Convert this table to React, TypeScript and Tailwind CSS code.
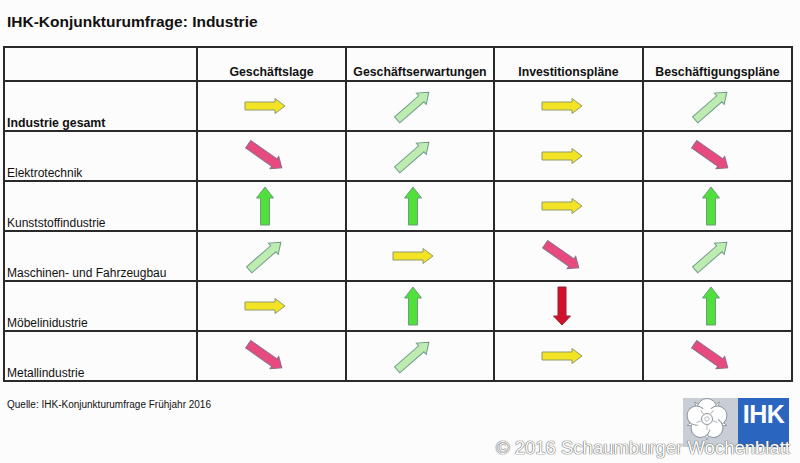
import React from "react";

type Kind = "R" | "UR" | "DR" | "U" | "D";

const specs: Record<Kind, { L: number; s: number; h: number; hl: number; rot: number; fill: string; stroke: string }> = {
  R: { L: 40, s: 8, h: 15, hl: 10, rot: 0, fill: "#f2e424", stroke: "#8f9a6c" },
  UR: { L: 42, s: 8, h: 15, hl: 10, rot: -41, fill: "#bdebb0", stroke: "#6f9d8c" },
  DR: { L: 41, s: 9, h: 15, hl: 9, rot: 35, fill: "#e84a80", stroke: "#8a6d8c" },
  U: { L: 38, s: 9, h: 17, hl: 11, rot: -90, fill: "#4fe03c", stroke: "#6e9c7c" },
  D: { L: 38, s: 8, h: 17, hl: 9, rot: 90, fill: "#d3112b", stroke: "#8c2a36" },
};

function Arrow({ kind }: { kind: Kind }) {
  const { L, s, h, hl, rot, fill, stroke } = specs[kind];
  const a = -L / 2;
  const b = L / 2 - hl;
  const c = L / 2;
  const pts = [
    [a, -s / 2],
    [b, -s / 2],
    [b, -h / 2],
    [c, 0],
    [b, h / 2],
    [b, s / 2],
    [a, s / 2],
  ]
    .map((p) => p.join(","))
    .join(" ");
  return (
    <svg width="56" height="46" viewBox="-28 -23 56 46">
      <polygon
        points={pts}
        fill={fill}
        stroke={stroke}
        strokeWidth="1"
        strokeLinejoin="miter"
        transform={`rotate(${rot})`}
      />
    </svg>
  );
}

const rows: { label: string; bold?: boolean; arrows: Kind[] }[] = [
  { label: "Industrie gesamt", bold: true, arrows: ["R", "UR", "R", "UR"] },
  { label: "Elektrotechnik", arrows: ["DR", "UR", "R", "DR"] },
  { label: "Kunststoffindustrie", arrows: ["U", "U", "R", "U"] },
  { label: "Maschinen- und Fahrzeugbau", arrows: ["UR", "R", "DR", "UR"] },
  { label: "Möbelinidustrie", arrows: ["R", "U", "D", "U"] },
  { label: "Metallindustrie", arrows: ["DR", "UR", "R", "DR"] },
];

const headers = ["Geschäftslage", "Geschäftserwartungen", "Investitionspläne", "Beschäftigungspläne"];

function Rose() {
  const petals = [0, 72, 144, 216, 288];
  return (
    <svg width="55" height="49" viewBox="0 0 55 49">
      <g transform="translate(24 21)">
        {petals.map((d) => (
          <g key={d} transform={`rotate(${d + 36})`}>
            <path d="M0,-21 L3,-13 L-3,-13 Z" fill="#ffffff" stroke="#8d939c" strokeWidth="0.8" />
          </g>
        ))}
        {petals.map((d) => (
          <g key={"p" + d} transform={`rotate(${d})`}>
            <circle cx="0" cy="-11" r="9.5" fill="#ffffff" stroke="#8d939c" strokeWidth="1" />
          </g>
        ))}
        <circle r="11" fill="#ffffff" />
        {petals.map((d) => (
          <g key={"l" + d} transform={`rotate(${d + 36})`}>
            <line x1="0" y1="-6" x2="0" y2="-11" stroke="#a3a8b0" strokeWidth="0.8" />
          </g>
        ))}
        <circle r="5.5" fill="#ffffff" stroke="#8d939c" strokeWidth="1" />
        <circle r="2.2" fill="none" stroke="#a3a8b0" strokeWidth="0.8" />
      </g>
    </svg>
  );
}

export default function App() {
  return (
    <div className="relative w-[800px] h-[463px] overflow-hidden bg-[#fcfcfc] font-['Liberation_Sans',Arial,sans-serif] text-[#111]">
      <div className="h-[46px] pt-[14px] pl-[7px] text-[15.5px] leading-none font-bold">
        IHK-Konjunkturumfrage: Industrie
      </div>
      <table className="ml-[3px] table-fixed border-collapse w-[788px]">
        <colgroup>
          <col className="w-[193px]" />
          <col className="w-[149px]" />
          <col className="w-[148px]" />
          <col className="w-[149px]" />
          <col className="w-[149px]" />
        </colgroup>
        <thead>
          <tr className="h-[34px]">
            <th className="border-2 border-[#2a2a2a] p-0"></th>
            {headers.map((h) => (
              <th
                key={h}
                className="border-2 border-[#2a2a2a] p-0 pb-[2px] align-bottom text-center text-[12.3px] leading-none font-bold"
              >
                {h}
              </th>
            ))}
          </tr>
        </thead>
        <tbody>
          {rows.map((r) => (
            <tr key={r.label} className="h-[50px]">
              <td
                className={`border-2 border-[#2a2a2a] p-0 pl-[2px] pb-[1px] align-bottom text-left leading-none ${
                  r.bold ? "font-bold text-[12.3px]" : "font-normal text-[12px]"
                }`}
              >
                {r.label}
              </td>
              {r.arrows.map((k, i) => (
                <td key={i} className="border-2 border-[#2a2a2a] p-0 align-middle">
                  <div className="flex items-center justify-center pr-[14px]">
                    <Arrow kind={k} />
                  </div>
                </td>
              ))}
            </tr>
          ))}
        </tbody>
      </table>
      <div className="mt-[18px] pl-[7px] text-[10px] leading-none">Quelle: IHK-Konjunkturumfrage Frühjahr 2016</div>

      <div className="absolute left-[683px] top-[398px] flex h-[49px] w-[106px]">
        <div className="w-[55px] bg-[#c9ced6]">
          <Rose />
        </div>
        <div className="flex-1 bg-[#2a65bf] flex items-start justify-center pt-[4px]">
          <span className="text-white font-bold text-[25px] leading-none tracking-[-0.5px]">IHK</span>
        </div>
      </div>
      <div className="absolute right-[10px] top-[439px] text-[18.5px] leading-none text-white [text-shadow:0_0_1px_#6b6b6b,0_0_1px_#6b6b6b,0_0_1px_#6b6b6b]">
        © 2016 Schaumburger Wochenblatt
      </div>
    </div>
  );
}
